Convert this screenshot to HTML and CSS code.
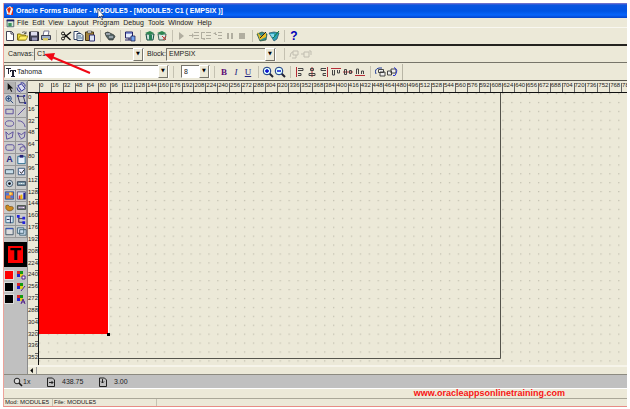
FILE: index.html
```html
<!DOCTYPE html>
<html lang="en">
<head>
<meta charset="utf-8">
<title>Oracle Forms Builder</title>
<link rel="stylesheet" href="styles.css">
</head>
<body>
<div class="window">
  <header class="titlebar">
    <svg class="icon" viewBox="0 0 12 12"><path d="M3 2h6v8H3z" fill="#e22b10"/><path d="M2 4l4-3 3 3-2 6-4-1z" fill="#f7f2ef"/><path d="M3 4l3-2 1 2-2 5z" fill="#e22b10"/></svg>
    <h1>Oracle Forms Builder - MODULE5 - [MODULE5: C1 ( EMPSIX )]</h1>
    <svg class="cursor" viewBox="0 0 8 12"><path d="M1 0v9l2-2 2 4 1-1-2-3h3z" fill="#fff" stroke="#223" stroke-width=".6"/></svg>
  </header>
  <nav class="menubar">
    <svg class="icon" viewBox="0 0 12 12"><path d="M2.500 2.500h8v8h-8z" fill="#d6e8d8" stroke="#456"/><path d="M2 2h9v2H2z" fill="#226"/><path d="M4 6h4v4H4z" fill="#38945b"/></svg>
    <a href="#">File</a><a href="#">Edit</a><a href="#">View</a><a href="#">Layout</a><a href="#">Program</a><a href="#">Debug</a><a href="#">Tools</a><a href="#">Window</a><a href="#">Help</a>
  </nav>
  <div class="toolbar main-tools">
    <button aria-label="New"><svg viewBox="0 0 12 12"><path d="M2.500 1.500h5l2 2v7h-7z" fill="#fff" stroke="#445"/><path d="M7 1.500V4h2.500" fill="none" stroke="#445"/></svg></button>
    <button aria-label="Open"><svg viewBox="0 0 12 12"><path d="M1.500 10V4h3l1 1h4v5z" fill="#eddc3c" stroke="#86740c"/><path d="M2 10l2-4h8l-2 4z" fill="#ffee62" stroke="#86740c" stroke-width=".7"/><path d="M6 2.500q3-2 4 1m0-2v2H8" fill="none" stroke="#333" stroke-width=".7"/></svg></button>
    <button aria-label="Save"><svg viewBox="0 0 12 12"><path d="M1.500 2h9v8.500h-9z" fill="#445" stroke="#223"/><path d="M3 2h6v3.500H3z" fill="#dde"/><path d="M4 7.500h5v3H4z" fill="#99b"/></svg></button>
    <button aria-label="Print"><svg viewBox="0 0 12 12"><path d="M3 6l1-5h5l-1 5z" fill="#fff" stroke="#557" stroke-width=".8"/><path d="M1.500 5.500h9v4h-9z" fill="#9aabc4" stroke="#334" stroke-width=".9"/><path d="M3 8h5v2.500H3z" fill="#d7c765"/></svg></button>
    <span class="sep"></span>
    <button aria-label="Cut"><svg viewBox="0 0 12 12"><path d="M11 2L4 7.500M10.500 10L4 4" stroke="#111" stroke-width="1.400"/><circle cx="3" cy="3.500" r="1.500" fill="none" stroke="#111"/><circle cx="3" cy="8.500" r="1.500" fill="none" stroke="#111"/></svg></button>
    <button aria-label="Copy"><svg viewBox="0 0 12 12"><path d="M2 1.500h4l2 2v6H2z" fill="#fff" stroke="#346"/><path d="M5 3.500h4l2 2v5H5z" fill="#dce8ee" stroke="#346"/><path d="M6 6h3M6 8h4" stroke="#579"/></svg></button>
    <button aria-label="Paste"><svg viewBox="0 0 12 12"><path d="M1.500 2h8v8.500h-8z" fill="#a3843c" stroke="#463712"/><path d="M3.500 1h4v2h-4z" fill="#eee" stroke="#333" stroke-width=".6"/><path d="M5.500 5h5v6h-5z" fill="#dce5f5" stroke="#337"/></svg></button>
    <span class="sep"></span>
    <button aria-label="Find"><svg viewBox="0 0 12 12"><path d="M1 3q3-2 5 0l4 2q2 2 0 3l-1 2H5L2 6z" fill="#566" stroke="#222" stroke-width=".6"/><path d="M2 4h4M5 7h4" stroke="#dde"/></svg></button>
    <span class="sep"></span>
    <button aria-label="Layout editor"><svg viewBox="0 0 12 12"><path d="M1.500 2h7v6h-7z" fill="#e5edfc" stroke="#226"/><path d="M1 10h7M5 8v2" stroke="#226"/><path d="M7 6h4v5H7z" fill="#76a5ef" stroke="#114" stroke-width=".7"/><path d="M2 3h6" stroke="#34a"/></svg></button>
    <span class="sep"></span>
    <button aria-label="Run form"><svg viewBox="0 0 12 12"><path d="M2 4h8l-1 6H3z" fill="#cfe2dd" stroke="#144c42"/><path d="M1 3l5-2 4 2-4 2z" fill="#2d8651"/><path d="M5 5h3v5H5z" fill="#258057"/></svg></button>
    <button aria-label="Debug form"><svg viewBox="0 0 12 12"><path d="M2 4h8l-1 6H3z" fill="#dae8e2" stroke="#3e665b"/><path d="M1 3l5-2 4 2-4 2z" fill="#2d8651"/><path d="M6 6l4 4M7 10l3-4" stroke="#c33"/></svg></button>
    <span class="sep"></span>
    <button aria-label="Go"><svg class="off" viewBox="0 0 12 12"><path d="M3 2l5 4-5 4z"/></svg></button>
    <button aria-label="Step into"><svg class="off" viewBox="0 0 12 12"><path d="M6 2h5v1H6zM6 5h5v1H6zM6 8h5v1H6zM1 5h3V3l2 2.500L4 8V6H1z"/></svg></button>
    <button aria-label="Step over"><svg class="off" viewBox="0 0 12 12"><path d="M6 2h5v1H6zM6 5h5v1H6zM6 8h5v1H6zM1 2h4v1H2v5h3v2L2 9H1z"/></svg></button>
    <button aria-label="Step out"><svg class="off" viewBox="0 0 12 12"><path d="M6 2h4v1H6zM6 5h4v1H6zM6 8h4v1H6zM2 3l2-1v2h1v1H3V4H1z"/></svg></button>
    <button aria-label="Pause"><svg class="off" viewBox="0 0 12 12"><path d="M3 3h2v6H3zM7 3h2v6H7z"/></svg></button>
    <button aria-label="Stop"><svg class="off" viewBox="0 0 12 12"><path d="M3 3h6v6H3z"/></svg></button>
    <span class="sep"></span>
    <button aria-label="Data block wizard"><svg viewBox="0 0 12 12"><path d="M1 4l5-2 5 2-1 6-6 1z" fill="#318b91" stroke="#274b2e" stroke-width=".7"/><path d="M1 2l4 4 5-4v5l-6 3z" fill="#e8bd23"/><path d="M4 8l6-6" stroke="#222"/></svg></button>
    <button aria-label="Layout wizard"><svg viewBox="0 0 12 12"><path d="M1 3l5-1 5 1-2 6-3 2z" fill="#2d9fb5" stroke="#24516a" stroke-width=".7"/><path d="M5 8l6-7" stroke="#173"/><path d="M2 4h4v3H4z" fill="#82d7ee"/></svg></button>
    <span class="sep"></span>
    <button class="help" aria-label="Help">?</button>
  </div>
  <div class="toolbar canvas-bar">
    <label for="canvas">Canvas:</label>
    <span class="combo"><select id="canvas"><option>C1</option></select></span>
    <label for="block">Block:</label>
    <span class="combo"><select id="block"><option>EMPSIX</option></select></span>
    <span class="sep"></span>
    <button aria-label="Associate"><svg class="faint" viewBox="0 0 12 12"><path d="M2 9l1-4 2-1M4 10h4V7M5 3h5v4H5z"/></svg></button>
    <button aria-label="Update layout"><svg class="faint" viewBox="0 0 12 12"><path d="M1 6h3M4 4h5v5H4zM9 3h2v4"/></svg></button>
  </div>
  <div class="toolbar font-bar">
    <span class="combo font-combo"><svg class="icon" viewBox="0 0 12 12"><path d="M1 2h5v1H4v5H3V3H1zM5 4h6v2h-1V5H9v5h1v1H6v-1h1V5H6v1H5z" fill="#223"/></svg><select aria-label="Font"><option>Tahoma</option></select></span>
    <span class="sep"></span>
    <span class="combo size-combo"><select aria-label="Font size"><option>8</option></select></span>
    <span class="sep"></span>
    <button class="letter bold">B</button>
    <button class="letter italic">I</button>
    <button class="letter underline">U</button>
    <span class="sep"></span>
    <button aria-label="Zoom in"><svg viewBox="0 0 12 12"><path d="M7 7l4 4" stroke="#223" stroke-width="2"/><circle cx="5" cy="5" r="3.800" fill="#dff" stroke="#11307d"/><path d="M3 5h4M5 3v4" stroke="#00c" stroke-width="1.400"/></svg></button>
    <button aria-label="Zoom out"><svg viewBox="0 0 12 12"><path d="M7 7l4 4" stroke="#223" stroke-width="2"/><circle cx="5" cy="5" r="3.800" fill="#dff" stroke="#11307d"/><path d="M3 5h4" stroke="#00c" stroke-width="1.400"/></svg></button>
    <span class="sep"></span>
    <button aria-label="Align left"><svg class="align" viewBox="0 0 12 12"><path class="guide" d="M2.500 1v10"/><path d="M4 2.500h5v2H4M4 7.500h3v2H4"/></svg></button>
    <button aria-label="Align centre"><svg class="align" viewBox="0 0 12 12"><path class="guide" d="M6 1v10"/><path d="M4.500 2.500h3v2h-3zM3 7.500h6v2H3z"/></svg></button>
    <button aria-label="Align right"><svg class="align" viewBox="0 0 12 12"><path class="guide" d="M9.500 1v10"/><path d="M8 2.500H3v2h5M8 7.500H5v2h3"/></svg></button>
    <button aria-label="Align top"><svg class="align" viewBox="0 0 12 12"><path class="guide" d="M1 2.500h10"/><path d="M2.500 4v5h2V4M7.500 4v3h2V4"/></svg></button>
    <button aria-label="Align middle"><svg class="align" viewBox="0 0 12 12"><path class="guide" d="M1 6h10"/><path d="M2.500 3.500h2v5h-2zM7.500 4.500h2v3h-2z"/></svg></button>
    <button aria-label="Align bottom"><svg class="align" viewBox="0 0 12 12"><path class="guide" d="M1 9.500h10"/><path d="M2.500 8V3h2v5M7.500 8V5h2v3"/></svg></button>
    <span class="sep"></span>
    <button aria-label="Bring forward"><svg viewBox="0 0 12 12"><path d="M2 8Q0 3 5 2h3" fill="none" stroke="#223d9a"/><path d="M4.500 3.500h5v3h-5zM6 6h5v4H6z" fill="#eee" stroke="#333" stroke-width=".9"/></svg></button>
    <button aria-label="Send back"><svg viewBox="0 0 12 12"><path d="M5 3h5v4H5zM1.500 5h4v4h-4z" fill="#eee" stroke="#333" stroke-width=".9"/><path d="M8 1.500q5 2 1 8H7" fill="none" stroke="#2c37d5"/></svg></button>
    <span class="bar-end"></span>
  </div>
  <main class="editor">
    <aside class="toolbox">
      <div class="tools">
        <button class="pressed" aria-label="Select"><svg viewBox="0 0 12 12"><path d="M4 1v8l2-2 2 4 1-1-2-3h3z" fill="#111"/></svg></button>
        <button aria-label="Rotate"><svg viewBox="0 0 12 12"><path d="M2 4l4-2 4 5-4 3z" fill="#dde" stroke="#229"/><path d="M5 1q5-1 5 4M1 6q0 4 4 5" fill="none" stroke="#229"/></svg></button>
        <button aria-label="Magnify"><svg viewBox="0 0 12 12"><circle cx="5" cy="5" r="3" fill="#bcd" stroke="#247"/><path d="M7 7l3 3M5 3v4M3 5h4" stroke="#247"/></svg></button>
        <button aria-label="Reshape"><svg viewBox="0 0 12 12"><path d="M2 2.500h6l2 7H4z" fill="none" stroke="#335"/><path d="M1 1h2v2H1zM9 9h2v2H9zM8 1h2v2H8z" fill="#229"/></svg></button>
        <button aria-label="Rectangle"><svg class="shape" viewBox="0 0 12 12"><path d="M2 3.500h8v5H2z"/></svg></button>
        <button aria-label="Line"><svg class="shape" viewBox="0 0 12 12"><path d="M2 10l8-8"/></svg></button>
        <button aria-label="Ellipse"><svg class="shape" viewBox="0 0 12 12"><ellipse cx="6" cy="6" rx="4.500" ry="3"/></svg></button>
        <button aria-label="Arc"><svg class="shape" viewBox="0 0 12 12"><path d="M2 3q7 0 8 7"/></svg></button>
        <button aria-label="Polygon"><svg class="shape" viewBox="0 0 12 12"><path d="M2 2l3 3 5-3-1 6-6 2z"/></svg></button>
        <button aria-label="Polyline"><svg class="shape" viewBox="0 0 12 12"><path d="M5 9L2 3l4 2 4-3-1 6-4 2"/></svg></button>
        <button aria-label="Rounded rectangle"><svg class="shape" viewBox="0 0 12 12"><rect x="2" y="3" width="9" height="6" rx="2"/></svg></button>
        <button aria-label="Freehand"><svg class="shape" viewBox="0 0 12 12"><path d="M2 3q4-2 7 1 3 5-2 6-4 0-2-4 3-2 5 0"/></svg></button>
        <button class="text-tool" aria-label="Text">A</button>
        <button aria-label="Text item"><svg viewBox="0 0 12 12"><path d="M2 2.500h8v8H2z" fill="#e9f0fb" stroke="#268"/><path d="M4 1h4v3H4z" fill="#227"/></svg></button>
        <button aria-label="Push button"><svg viewBox="0 0 12 12"><path d="M1.500 4h9v4.500h-9z" fill="#c7dce8" stroke="#456"/></svg></button>
        <button aria-label="Check box"><svg viewBox="0 0 12 12"><path d="M2.500 2.500h7v7h-7z" fill="#eef" stroke="#357"/><path d="M4 6l2 2 3-4" fill="none" stroke="#111"/></svg></button>
        <button aria-label="Radio button"><svg viewBox="0 0 12 12"><circle cx="6" cy="6" r="3.500" fill="#cde" stroke="#456"/><circle cx="6" cy="6" r="1.500" fill="#111"/></svg></button>
        <button aria-label="Display item"><svg viewBox="0 0 12 12"><path d="M1.500 4h9v4h-9z" fill="#79a" stroke="#345"/><path d="M3 6h1m1 0h2m1 0h1" stroke="#fff"/></svg></button>
        <button aria-label="Image item"><svg viewBox="0 0 12 12"><path d="M1.500 2h9v8h-9z" fill="#e9812e" stroke="#25a"/><path d="M2 3h4v3H2zM7 6h3v3H7z" fill="#5672d8"/><circle cx="7" cy="4" r="1.500" fill="#fd5"/></svg></button>
        <button aria-label="Chart item"><svg viewBox="0 0 12 12"><path d="M1.500 2h9v8h-9z" fill="#dde" stroke="#557"/><path d="M3 6h2v4H3z" fill="#d33"/><path d="M5 5h2v5H5z" fill="#e9b900"/><path d="M8 3h2v7H8z" fill="#229"/></svg></button>
        <button aria-label="Bean area"><svg viewBox="0 0 12 12"><path d="M2 4q3-2 4 1 5-1 4 3-5 4-8-1z" fill="#ce8a20" stroke="#6b491b" stroke-width=".7"/></svg></button>
        <button aria-label="List item"><svg viewBox="0 0 12 12"><path d="M1.500 4h9v4h-9z" fill="#879" stroke="#343"/><path d="M3 6h1m1 0h1m1 0h2" stroke="#fff"/></svg></button>
        <button aria-label="ActiveX control"><svg viewBox="0 0 12 12"><path d="M2 2.500h8v7H2z" fill="#dbe9f3" stroke="#368"/><path d="M7 2v8M3 6h3" stroke="#225"/></svg></button>
        <button aria-label="Hierarchical tree"><svg viewBox="0 0 12 12"><path d="M3 3v6h5M3 5h5" fill="none" stroke="#335"/><path d="M1 1h3v3H1zM7 3h3v3H7zM7 8h3v3H7z" fill="#22d"/></svg></button>
        <button aria-label="Stacked canvas"><svg viewBox="0 0 12 12"><path d="M2 2.500h8v7H2z" fill="#ddd" stroke="#456"/><path d="M2 3h8" stroke="#24c"/></svg></button>
        <button aria-label="Tab canvas"><svg viewBox="0 0 12 12"><path d="M1.500 2h7v6h-7zM4 4h7v6H4z" fill="#cde" stroke="#467"/></svg></button>
      </div>
      <div class="preview">T</div>
      <div class="colors">
        <span class="swatch fill"></span><button aria-label="Fill colour"><svg viewBox="0 0 12 12"><path d="M2 2h3v3H2z" fill="#d22"/><path d="M5 2h3v3H5z" fill="#191"/><path d="M2 5h3v3H2z" fill="#22c"/><path d="M5 5h3v3H5z" fill="#dc2"/><path d="M7 7h3v3H7z" fill="#eef" stroke="#528"/></svg></button>
        <span class="swatch"></span><button aria-label="Line colour"><svg viewBox="0 0 12 12"><path d="M2 2h3v3H2z" fill="#d22"/><path d="M5 2h3v3H5z" fill="#191"/><path d="M2 5h3v3H2z" fill="#22c"/><path d="M5 5h3v3H5z" fill="#dc2"/><path d="M6 10l4-5" stroke="#528"/></svg></button>
        <span class="swatch"></span><button aria-label="Text colour"><svg viewBox="0 0 12 12"><path d="M2 2h3v3H2z" fill="#d22"/><path d="M5 2h3v3H5z" fill="#191"/><path d="M2 5h3v3H2z" fill="#22c"/><path d="M5 5h3v3H5z" fill="#dc2"/><path d="M6 11l2-5 2 5M7 9h3" fill="none" stroke="#528"/></svg></button>
      </div>
    </aside>
    <div class="ruler-x" id="ruler-x"></div>
    <div class="ruler-y" id="ruler-y"></div>
    <svg class="layout-canvas" role="img" aria-label="Canvas C1">
      <defs><pattern id="grid" width="8.910" height="8.910" patternUnits="userSpaceOnUse"><path d="M0 0h1.300v1.300H0z" fill="#c2c0b0"/></pattern></defs>
      <rect width="100%" height="100%" fill="url(#grid)"/>
      <path d="M0 265.500h461.500V0" fill="none" stroke="#55544c"/>
      <path d="M69 0h1v241h-1z" fill="#fff"/>
      <path d="M0 0h69v241H0z" fill="#f00"/>
      <path d="M68 240h3v3h-3z" fill="#000"/>
    </svg>
    <div class="scroll-x"><button aria-label="Scroll left"><svg viewBox="0 0 8 8"><path d="M5 1v6L2 4z"/></svg></button></div>
  </main>
  <div class="infobar">
    <svg viewBox="0 0 10 10"><circle cx="4" cy="4" r="2.800" fill="#d8d8d8" stroke="#222"/><path d="M6 6l3 3" stroke="#111" stroke-width="1.600"/></svg><span class="zoom">1x</span>
    <svg viewBox="0 0 10 10"><path d="M1.500 1h5l2 2v6.500h-7zM3 5.500h4M5.500 4L7 5.500 5.500 7" fill="none" stroke="#222"/></svg><span class="pos">438.75</span>
    <svg viewBox="0 0 10 10"><path d="M1.500 1h5l2 2v6.500h-7zM4.500 2v4M3 4.500L4.500 6 6 4.500" fill="none" stroke="#222"/></svg><span class="pos">3.00</span>
  </div>
  <div class="site"><a href="#">www.oracleappsonlinetraining.com</a></div>
  <footer class="statusbar"><span>Mod: MODULE5</span><span>File: MODULE5</span><span></span></footer>
  <svg class="pointer" viewBox="0 0 50 24"><path d="M47 21L9 5" stroke="#f00714" stroke-width="2"/><path d="M1 2l11-1-3 8z" fill="#f00714"/></svg>
</div>
<script src="rulers.js"></script>
</body>
</html>
```
FILE: styles.css
```css
* { box-sizing: border-box; }
body {
  margin: 0;
  height: 100vh;
  padding: 3px 3px 2px;
  background: #fff;
  color: #222;
  font: 7px/10px "Liberation Sans", Arial, sans-serif;
}
.window {
  position: relative;
  height: 100%;
  display: flex;
  flex-direction: column;
  background: #ece9d8;
  border-left: 1px solid #eda39b;
  border-bottom: 1px solid #e88c85;
}
button {
  flex: none;
  width: 12px;
  height: 12px;
  padding: 0;
  border: 0;
  background: none;
  color: inherit;
  font: inherit;
}
button svg, .icon { display: block; width: 12px; height: 12px; flex: none; }
a { color: inherit; text-decoration: none; }

.titlebar {
  position: relative;
  flex: none;
  height: 15px;
  display: flex;
  align-items: center;
  background: linear-gradient(#8b78c8 0, #0a55df 2px, #0054e3 8px, #0765fa 12px, #0542c8 15px);
  color: #fff;
}
.titlebar h1 { margin: 0; font: bold 7px/12px "Liberation Sans", Arial, sans-serif; white-space: nowrap; }
.cursor { position: absolute; left: 93px; top: 6px; width: 8px; height: 12px; z-index: 2; }

.menubar { flex: none; height: 10px; display: flex; align-items: center; gap: 4px; border-bottom: 1px solid #f8f7f0; }
.menubar .icon { height: 10px; margin-right: -3px; }

.toolbar { flex: none; display: flex; align-items: center; }
.sep { flex: none; width: 1px; height: 12px; margin: 0 3px 0 4px; background: #c4c1b1; }
.main-tools { height: 18px; border-bottom: 2px solid #24231f; }
.canvas-bar { height: 17px; padding-left: 4px; border-bottom: 1px solid #77756a; }
.font-bar { height: 17px; }
.off { fill: #b1aea0; }
.faint { fill: none; stroke: #c0bdb0; }
.help { color: #0000b8; font: bold 12px/12px "Liberation Sans", sans-serif; }
.letter { color: #22227c; font: 9px/12px "Liberation Serif", serif; }
.bold { font-weight: bold; color: #5c0c76; }
.italic { font-style: italic; }
.underline { text-decoration: underline; }
.align { fill: none; stroke: #444; }
.guide { stroke: #b62d36; }
.bar-end { width: 5px; height: 16px; border-right: 1px solid #b8b5a5; }

.combo {
  flex: none;
  display: flex;
  align-items: center;
  width: 110px;
  height: 13px;
  border: 1px solid #77756b;
  border-right-color: #fff;
  border-bottom-color: #fff;
}
.combo select {
  flex: 1;
  min-width: 0;
  height: 11px;
  padding: 0 2px;
  border: 0;
  border-radius: 0;
  appearance: none;
  background: none;
  color: inherit;
  font: inherit;
}
.combo::after {
  content: "▼";
  width: 8px;
  height: 11px;
  border: 1px solid #fff;
  border-right-color: #77756b;
  border-bottom-color: #77756b;
  background: #ece9d8;
  color: #000;
  font: 5px/8px "DejaVu Sans", sans-serif;
  text-align: center;
}
.canvas-bar label { width: 26px; white-space: nowrap; }
.canvas-bar .combo + label { width: 19px; margin-left: 3px; }
.canvas-bar .sep { margin-left: 8px; }
.font-combo, .size-combo { background: #fff; }
.font-combo { width: 165px; }
.font-combo select { padding: 0; }
.size-combo { width: 29px; margin-left: 4px; }

.editor {
  flex: 1;
  min-height: 0;
  display: grid;
  grid-template: 13px 1fr 9px / 24px 11px 1fr;
  border-bottom: 1px solid #8c8a80;
}
.toolbox { grid-row: 1 / 4; background: #c0c0c0; border-right: 1px solid #8b8b8b; border-top: 1px solid #8b8b8b; overflow: hidden; }
.tools { display: grid; grid-template-columns: 12px 11px; grid-auto-rows: 12px; padding-top: 1px; }
.tools button { width: 100%; border-right: 1px solid #999; border-bottom: 1px solid #999; background: #cbcbcb; }
.tools svg { width: 11px; height: 11px; }
.tools .pressed { background: #b2b2b2; }
.shape { fill: none; stroke: #57489a; }
.tools .text-tool { color: #28287f; font: bold 9px/11px "Liberation Sans", sans-serif; }
.preview {
  height: 25px;
  margin: 4px 0 2px;
  border: 4px solid #000;
  background: #f00;
  color: #000;
  font: bold 16px/17px "DejaVu Sans", sans-serif;
  text-align: center;
}
.colors { display: grid; grid-template-columns: 11px 12px; grid-auto-rows: 12px; align-items: center; }
.swatch { width: 10px; height: 10px; border: 1px solid #ddd; background: #000; }
.swatch.fill { background: #f00; }

.ruler-x, .ruler-y { font: 6px/8px "Liberation Sans", Arial, sans-serif; }
.ruler-x {
  grid-column: 2 / 4;
  display: grid;
  padding-left: 11px;
  border-top: 1px solid #55534b;
  border-bottom: 1px solid #111;
  overflow: hidden;
}
.ruler-x span { min-width: 0; padding-left: 1px; background: linear-gradient(#666, #666) 0 100% / 1px 9px no-repeat; white-space: nowrap; }
.ruler-y { grid-row: 2; grid-column: 2; display: grid; border-right: 1px solid #111; overflow: hidden; }
.ruler-y span { min-height: 0; background: linear-gradient(#666, #666) 100% 0 / 3px 1px no-repeat; }
.layout-canvas { display: block; width: 100%; height: 100%; }
.scroll-x { grid-column: 2 / 4; display: flex; border-top: 2px solid #f6f4ea; }
.scroll-x button { width: 9px; height: 7px; border-right: 1px solid #999; }
.scroll-x svg { width: 8px; height: 7px; }

.infobar { flex: none; height: 14px; display: flex; align-items: center; padding-left: 9px; background: #c0c0c0; border-bottom: 1px solid #fff; }
.infobar svg { width: 10px; height: 10px; }
.infobar .zoom { width: 23px; }
.infobar .pos { width: 42px; padding-left: 6px; }
.site { flex: none; height: 9px; padding-right: 62px; text-align: right; color: #f81414; font: bold 9px/8px "Liberation Sans", sans-serif; }
.statusbar { flex: none; height: 8px; display: flex; border-top: 1px solid #aaa798; font-size: 6px; line-height: 7px; }
.statusbar span { width: 49px; padding-left: 1px; border-right: 1px solid #c5c2b2; white-space: nowrap; }
.statusbar span:nth-child(2) { width: 104px; }
.statusbar span:last-child { flex: 1; border: 0; }
.pointer { position: absolute; left: 39px; top: 49px; width: 50px; height: 24px; }
```
FILE: rulers.js
```js
const step = 16;

function label(ruler, count) {
  for (let i = 0; i < count; i += 1) {
    const mark = document.createElement("span");
    mark.textContent = i * step;
    ruler.append(mark);
  }
}

const rulerX = document.getElementById("ruler-x");
const rulerY = document.getElementById("ruler-y");
rulerX.style.gridTemplateColumns = "repeat(49, 2fr) 1fr";
rulerY.style.gridTemplateRows = "repeat(23, 1fr)";
label(rulerX, 50);
label(rulerY, 23);
```
